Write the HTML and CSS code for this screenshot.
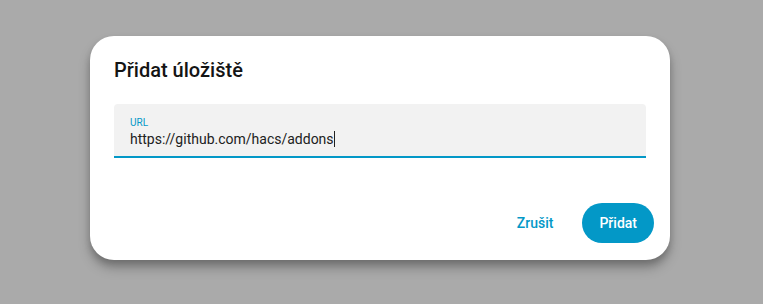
FILE: index.html
```html
<!DOCTYPE html>
<html lang="cs">
<head>
<meta charset="utf-8">
<link rel="stylesheet" href="styles.css">
</head>
<body>
<div class="scrim">
  <div class="dialog">
    <h2 class="title">Přidat úložiště</h2>
    <div class="field">
      <div class="label">URL</div>
      <div class="value">https://github.com/hacs/addons<span class="caret"></span></div>
    </div>
    <div class="actions">
      <button class="btn text">Zrušit</button>
      <button class="btn filled">Přidat</button>
    </div>
  </div>
</div>
</body>
</html>
```
FILE: styles.css
```css
html, body {
  margin: 0;
  padding: 0;
  height: 100%;
}
body {
  background: #aaaaaa;
  font-family: Roboto, "Noto Sans", sans-serif;
}
.scrim {
  padding: 36px 0 0 90px;
}
.dialog {
  box-sizing: border-box;
  width: 580px;
  height: 224px;
  background: #ffffff;
  border-radius: 24px;
  box-shadow: 0 8px 12px rgba(0,0,0,0.25), 0 4px 6px rgba(0,0,0,0.15);
  padding: 20px 16px 17px 24px;
  display: flex;
  flex-direction: column;
}
.title {
  margin: 0;
  font-size: 20px;
  font-weight: 500;
  line-height: 28px;
  color: #141414;
  letter-spacing: 0;
}
.field {
  margin-top: 20px;
  margin-right: 8px;
  height: 54px;
  box-sizing: border-box;
  background: #f2f2f2;
  border-radius: 4px 4px 0 0;
  border-bottom: 2px solid #0398c7;
  padding: 13px 16px 0 16px;
}
.label {
  font-size: 10px;
  line-height: 12px;
  color: #0398c7;
}
.value {
  font-size: 14px;
  line-height: 20px;
  color: #212121;
  margin-top: 0;
}
.caret {
  display: inline-block;
  width: 1px;
  height: 16px;
  background: #212121;
  vertical-align: -3px;
}
.actions {
  margin-top: auto;
  display: flex;
  justify-content: flex-end;
  align-items: center;
  gap: 17px;
}
.btn {
  font-family: Roboto, "Noto Sans", sans-serif;
  font-size: 14px;
  font-weight: 500;
  border: none;
  height: 40px;
  border-radius: 20px;
  padding: 0 17px;
  cursor: pointer;
}
.btn.text {
  background: transparent;
  color: #0398c7;
  padding: 0 12px;
}
.btn.filled {
  background: #0398c7;
  color: #ffffff;
}
```
